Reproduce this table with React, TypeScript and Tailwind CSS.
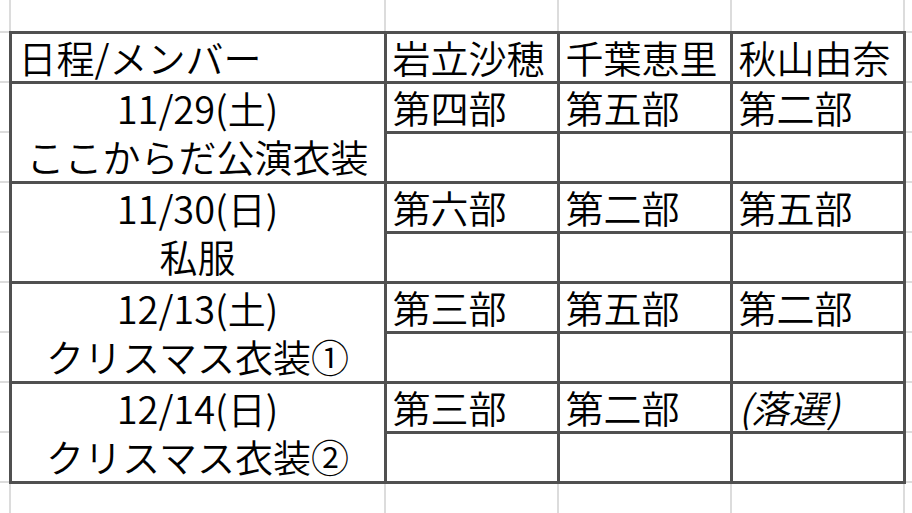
import React from 'react';

interface Day {
  date: string;
  note: string;
  parts: string[];
}

const members = ['岩立沙穂', '千葉恵里', '秋山由奈'];

const days: Day[] = [
  { date: '11/29(土)', note: 'ここからだ公演衣装', parts: ['第四部', '第五部', '第二部'] },
  { date: '11/30(日)', note: '私服', parts: ['第六部', '第二部', '第五部'] },
  { date: '12/13(土)', note: 'クリスマス衣装①', parts: ['第三部', '第五部', '第二部'] },
  { date: '12/14(日)', note: 'クリスマス衣装②', parts: ['第三部', '第二部', '(落選)'] },
];

// spreadsheet grid lines vs. the drawn table borders
const grid = 'border-2 border-[#dcdcdc] p-0';
const dark = 'border-[3px] border-[#505050] p-0';

const EmptyCells: React.FC<{ first?: boolean }> = ({ first }) => (
  <>
    <td className={`${grid} border-l-0 ${first ? 'border-t-0' : ''}`} />
    {[0, 1, 2, 3].map((i) => (
      <td key={i} className={`${grid} ${first ? 'border-t-0' : ''}`} />
    ))}
    <td className={`${grid} ${first ? 'border-t-0' : ''}`} />
  </>
);

const App: React.FC = () => {
  return (
    <div className="w-[912px] h-[513px] overflow-hidden bg-white font-['Noto_Sans_CJK_JP_DemiLight','Noto_Sans_CJK_JP_Light','Noto_Sans_CJK_JP',sans-serif] font-light text-black">
      <table className="border-collapse table-fixed w-[970px] text-[38px]">
        <colgroup>
          <col className="w-[10px]" />
          <col className="w-[375px]" />
          <col className="w-[173px]" />
          <col className="w-[173px]" />
          <col className="w-[173px]" />
          <col className="w-[66px]" />
        </colgroup>
        <tbody>
          <tr className="h-[32px]">
            <EmptyCells first />
          </tr>

          {/* header */}
          <tr className="h-[50px]">
            <td className={`${grid} border-l-0`} />
            <td className={`${dark} pl-[7px] leading-[46px] whitespace-nowrap`}>日程/メンバー</td>
            {members.map((m) => (
              <td key={m} className={`${dark} pl-[6px] leading-[46px] whitespace-nowrap`}>
                {m}
              </td>
            ))}
            <td className={grid} />
          </tr>

          {days.map((d) => (
            <React.Fragment key={d.date}>
              <tr className="h-[50px]">
                <td className={`${grid} border-l-0`} />
                <td rowSpan={2} className={`${dark} text-center leading-[48px] whitespace-nowrap`}>
                  <div>{d.date}</div>
                  <div>{d.note}</div>
                </td>
                {d.parts.map((p, i) => (
                  <td
                    key={i}
                    className={`${dark} pl-[6px] leading-[46px] whitespace-nowrap ${p.startsWith('(') ? 'italic' : ''}`}
                  >
                    {p}
                  </td>
                ))}
                <td className={grid} />
              </tr>
              <tr className="h-[50px]">
                <td className={`${grid} border-l-0`} />
                <td className={dark} />
                <td className={dark} />
                <td className={dark} />
                <td className={grid} />
              </tr>
            </React.Fragment>
          ))}

          <tr className="h-[50px]">
            <EmptyCells />
          </tr>
        </tbody>
      </table>
    </div>
  );
};

export default App;
